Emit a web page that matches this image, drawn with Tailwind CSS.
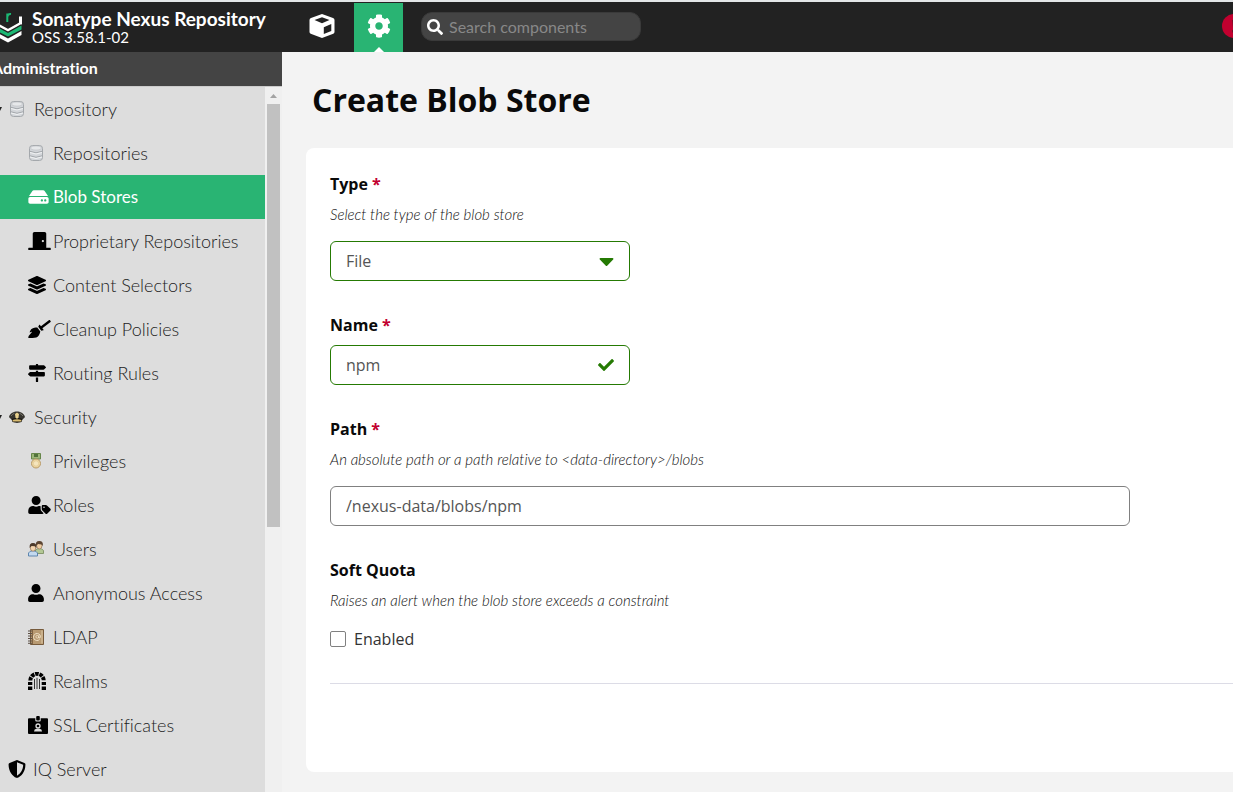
<!DOCTYPE html>
<html lang="en">
<head>
<meta charset="utf-8">
<meta name="viewport" content="width=device-width, initial-scale=1">
<title>Create Blob Store - Sonatype Nexus Repository</title>
<script src="https://cdn.jsdelivr.net/npm/@tailwindcss/browser@4"></script>
</head>
<body class="flex h-screen flex-col overflow-hidden bg-[#f3f3f3] font-['Lato',sans-serif] text-[#333] [font-variant-ligatures:none]">
<header class="flex h-13 shrink-0 items-stretch border-t-2 border-[#e3e6e8] bg-[#222] text-white">
  <div class="flex w-[282px] shrink-0 items-center gap-2">
    <svg class="h-8 w-6 shrink-0" viewBox="0 0 24 32" fill="none">
      <path d="M7.300 11V2.500M7.300 5.800C7.700 3.500 9 2.700 11 3" stroke="#1cb874" stroke-width="2"/>
      <path d="M-6 6V12L8 19.500L20.500 12.500V5.500" stroke="#fff" stroke-width="3"/>
      <path d="M-6 13L8 20.500L21.500 13V18L8 25.500L-6 18Z" fill="#222"/>
      <path d="M-6 14.500L8 22L21.500 14.500V18.500L8 25.500L-6 18.500Z" fill="#1cb874"/>
      <path d="M-6 20L8 27.500L21.500 20V24L8 31.500L-6 24Z" fill="#fff"/>
    </svg>
    <div>
      <div class="text-[19px] leading-5 font-bold whitespace-nowrap">Sonatype Nexus Repository</div>
      <div class="text-[15px] leading-4">OSS 3.58.1-02</div>
    </div>
  </div>
  <nav class="ml-2 flex" aria-label="Mode">
    <button class="flex w-16 items-center justify-center pb-0.5" aria-label="Browse">
      <svg class="h-6 w-[26px]" viewBox="0 0 26 24"><path fill="#fff" fill-rule="evenodd" d="M13 0L24 4Q25.500 4.700 25.500 6V18Q25.500 19.300 24.300 19.800L13 24L1.700 19.800Q.5 19.300 .5 18V6Q.5 4.700 2 4ZM13 3.200L5.500 6L13 9.200L20.500 6ZM14.800 13.200V20L22.300 17V10Z"/></svg>
    </button>
    <button class="relative flex w-[49px] items-center justify-center border-t border-[#222] bg-[#29b473] pb-[3px]" aria-label="Administration" aria-current="page">
      <svg class="size-6" viewBox="0 0 512 512" fill="#fff"><path d="M487.400 315.700l-42.600-24.600c4.300-23.200 4.300-47 0-70.200l42.600-24.600c4.900-2.800 7.100-8.600 5.500-14-11.100-35.600-30-67.800-54.700-94.600-3.800-4.100-10-5.100-14.800-2.300L380.800 110c-17.900-15.400-38.500-27.300-60.800-35.100V25.800c0-5.600-3.900-10.500-9.400-11.700-36.700-8.200-74.300-7.800-109.200 0-5.500 1.200-9.400 6.100-9.400 11.700V75c-22.200 7.900-42.800 19.800-60.800 35.100L88.700 85.500c-4.900-2.800-11-1.900-14.800 2.300-24.700 26.700-43.600 58.900-54.700 94.600-1.700 5.400.6 11.200 5.500 14L67.300 221c-4.300 23.200-4.300 47 0 70.200l-42.600 24.600c-4.900 2.800-7.100 8.600-5.500 14 11.100 35.600 30 67.800 54.700 94.600 3.800 4.100 10 5.100 14.800 2.300l42.600-24.600c17.900 15.400 38.500 27.300 60.800 35.100v49.200c0 5.600 3.900 10.500 9.400 11.700 36.700 8.200 74.300 7.800 109.200 0 5.500-1.200 9.400-6.100 9.400-11.700v-49.200c22.200-7.900 42.800-19.800 60.800-35.100l42.600 24.600c4.900 2.800 11 1.900 14.800-2.300 24.700-26.700 43.600-58.900 54.700-94.600 1.500-5.500-.7-11.300-5.600-14.100zM256 336c-44.100 0-80-35.900-80-80s35.900-80 80-80 80 35.900 80 80-35.900 80-80 80z"/></svg>
      <svg class="absolute bottom-0 h-[5px] w-[10px]" viewBox="0 0 10 5" fill="#fff"><path d="M0 5L5 0L10 5Z"/></svg>
    </button>
  </nav>
  <label class="mb-px ml-[18px] flex h-[29px] w-[220px] items-center gap-[6px] self-center rounded-[11px] border border-[#3a3a3a] bg-[#444] pr-2 pl-[5px]">
    <svg class="size-4 shrink-0" viewBox="0 0 512 512" fill="#fff" aria-label="Search"><path d="M505 442.700L405.300 343c-4.500-4.500-10.600-7-17-7H372c27.600-35.300 44-79.700 44-128C416 93.100 322.900 0 208 0S0 93.100 0 208s93.100 208 208 208c48.300 0 92.700-16.400 128-44v16.300c0 6.400 2.500 12.500 7 17l99.700 99.700c9.400 9.400 24.600 9.400 33.900 0l28.300-28.300c9.400-9.400 9.400-24.600.1-34zM208 336c-70.700 0-128-57.200-128-128 0-70.700 57.200-128 128-128 70.700 0 128 57.200 128 128 0 70.700-57.200 128-128 128z"/></svg>
    <input type="search" placeholder="Search components" aria-label="Search components" class="min-w-0 flex-1 bg-transparent text-base text-white outline-none placeholder:text-[#888]">
  </label>
  <button class="-mr-[13px] mb-0.5 ml-auto shrink-0 self-center" aria-label="System health">
    <svg class="size-6" viewBox="0 0 24 24"><circle cx="12" cy="12" r="12" fill="#c2002f"/><path d="M10.500 6H13.500L13 13.500H11ZM10.500 16H13.500V18.500H10.500Z" fill="#222"/></svg>
  </button>
</header>

<div class="flex min-h-0 flex-1">
  <aside class="flex w-[282px] shrink-0 flex-col">
    <h2 class="-ml-2 h-[34px] shrink-0 bg-[#444] text-base leading-8 font-bold text-white">Administration</h2>
    <div class="flex min-h-0 flex-1 border-t border-[#ccc] bg-[#ddd]">
      <nav class="min-w-0 flex-1 overflow-hidden text-lg font-light text-[#222]" aria-label="Administration">
        <a href="#repository" class="flex h-11 items-center">
          <span class="flex w-[34px] shrink-0 items-center gap-[7px]">
            <svg class="h-2 w-[2px]" viewBox="0 0 2 8"><path d="M0 2H2L0 6Z" fill="#222"/></svg>
            <svg class="size-4" viewBox="0 0 16 16"><rect x="1.500" y=".5" width="13" height="15" rx="3" fill="#d2d5d9" stroke="#a4a8ac"/><path d="M2 6.300Q8 9.300 14 6.300M2 10.800Q8 13.800 14 10.800" fill="none" stroke="#a4a8ac"/><path d="M2 7.500Q8 10.500 14 7.500M2 12Q8 15 14 12" fill="none" stroke="#f4f5f6" stroke-width=".9"/><ellipse cx="8" cy="3" rx="5.500" ry="2" fill="#e6e8ea" stroke="#b8bbbf" stroke-width=".5"/></svg>
          </span>Repository</a>
        <a href="#repositories" class="flex h-11 items-center pl-7">
          <span class="w-[25px] shrink-0"><svg class="size-4" viewBox="0 0 16 16"><rect x="1.500" y=".5" width="13" height="15" rx="3" fill="#d2d5d9" stroke="#a4a8ac"/><path d="M2 6.300Q8 9.300 14 6.300M2 10.800Q8 13.800 14 10.800" fill="none" stroke="#a4a8ac"/><path d="M2 7.500Q8 10.500 14 7.500M2 12Q8 15 14 12" fill="none" stroke="#f4f5f6" stroke-width=".9"/><ellipse cx="8" cy="3" rx="5.500" ry="2" fill="#e6e8ea" stroke="#b8bbbf" stroke-width=".5"/></svg></span>Repositories</a>
        <a href="#blobstores" class="flex h-11 items-center bg-[#29b473] pl-7 font-normal text-white" aria-current="page">
          <span class="w-[25px] shrink-0"><svg class="h-[18px] w-[21px]" viewBox="0 0 576 512" fill="#fff"><path d="M576 304v96c0 26.510-21.490 48-48 48H48c-26.510 0-48-21.490-48-48v-96c0-26.510 21.490-48 48-48h480c26.510 0 48 21.490 48 48zm-48-80a79.557 79.557 0 0 1 30.777 6.165L462.250 85.374A48.003 48.003 0 0 0 422.311 64H153.689a48 48 0 0 0-39.938 21.374L17.223 230.165A79.557 79.557 0 0 1 48 224h480zm-48 96c-17.673 0-32 14.327-32 32s14.327 32 32 32 32-14.327 32-32-14.327-32-32-32zm-96 0c-17.673 0-32 14.327-32 32s14.327 32 32 32 32-14.327 32-32-14.327-32-32-32z"/></svg></span><span class="text-[17px]">Blob Stores</span></a>
        <a href="#proprietary" class="flex h-11 items-center pl-7">
          <span class="w-[25px] shrink-0"><svg class="h-[18px] w-[23px]" viewBox="0 0 640 512" fill="#000"><path d="M624 448H512V50.800C512 22.780 490.470 0 464 0H175.990c-26.470 0-48 22.780-48 50.800V448H16c-8.840 0-16 7.160-16 16v32c0 8.840 7.160 16 16 16h608c8.840 0 16-7.160 16-16v-32c0-8.840-7.160-16-16-16zM415.990 288c-17.670 0-32-14.330-32-32s14.330-32 32-32 32 14.330 32 32c.01 17.670-14.320 32-32 32z"/></svg></span>Proprietary Repositories</a>
        <a href="#selectors" class="flex h-11 items-center pl-7">
          <span class="w-[25px] shrink-0"><svg class="size-[18px]" viewBox="0 0 512 512" fill="#000"><path d="M12.410 148.020l232.940 105.670c6.800 3.090 14.490 3.090 21.290 0l232.940-105.670c16.550-7.510 16.550-32.520 0-40.030L266.650 2.310a25.607 25.607 0 0 0-21.290 0L12.410 107.980c-16.550 7.510-16.550 32.530 0 40.040zm487.180 88.280l-58.090-26.330-161.640 73.270c-7.560 3.430-15.590 5.170-23.860 5.170s-16.290-1.740-23.860-5.170L70.510 209.970l-58.100 26.330c-16.550 7.500-16.550 32.500 0 40l232.940 105.590c6.800 3.080 14.490 3.080 21.290 0L499.590 276.300c16.550-7.500 16.550-32.500 0-40zm0 127.800l-57.870-26.230-161.860 73.370c-7.560 3.430-15.590 5.170-23.860 5.170s-16.290-1.740-23.860-5.170L70.290 337.870 12.410 364.100c-16.550 7.500-16.550 32.500 0 40l232.940 105.590c6.800 3.080 14.490 3.080 21.290 0L499.590 404.100c16.550-7.500 16.550-32.500 0-40z"/></svg></span>Content Selectors</a>
        <a href="#cleanup" class="flex h-11 items-center pl-7">
          <span class="w-[25px] shrink-0"><svg class="h-[18px] w-[23px]" viewBox="0 0 640 512" fill="#000"><path d="M256.470 216.770l86.730 109.180s-16.600 102.360-76.570 150.120C206.660 523.850 0 510.190 0 510.190s3.800-23.140 11-55.430l94.620-112.170c3.970-4.700-.87-11.620-6.650-9.500l-60.400 22.090c14.440-41.660 32.720-80.040 54.600-97.470 59.970-47.760 163.300-40.940 163.300-40.940zM636.530 31.030l-19.860-25c-5.490-6.900-15.520-8.050-22.410-2.560l-232.480 177.800-34.140-42.970c-5.090-6.410-15.140-5.210-18.590 2.210l-25.330 54.550 86.730 109.180 58.800-12.450c8-1.690 11.420-11.200 6.340-17.600l-34.090-42.920 232.480-177.800c6.890-5.480 8.040-15.530 2.550-22.440z"/></svg></span>Cleanup Policies</a>
        <a href="#routing" class="flex h-11 items-center pl-7">
          <span class="w-[25px] shrink-0"><svg class="size-[18px]" viewBox="0 0 512 512" fill="#000"><path d="M507.310 84.690L464 41.370c-6-6-14.140-9.370-22.630-9.370H288V16c0-8.840-7.160-16-16-16h-32c-8.840 0-16 7.160-16 16v16H56c-13.250 0-24 10.750-24 24v80c0 13.250 10.750 24 24 24h385.370c8.490 0 16.620-3.370 22.630-9.370l43.310-43.310c6.250-6.260 6.250-16.380 0-22.630zM224 496c0 8.840 7.160 16 16 16h32c8.840 0 16-7.160 16-16V384h-64v112zm232-272H288v-32h-64v32H70.630c-8.490 0-16.620 3.370-22.630 9.370L4.690 276.690c-6.250 6.250-6.250 16.380 0 22.630L48 342.630c6 6 14.140 9.370 22.630 9.370H456c13.250 0 24-10.750 24-24v-80c0-13.250-10.750-24-24-24z"/></svg></span>Routing Rules</a>
        <a href="#security" class="flex h-11 items-center">
          <span class="flex w-[34px] shrink-0 items-center gap-[7px]">
            <svg class="h-2 w-[2px]" viewBox="0 0 2 8"><path d="M0 2H2L0 6Z" fill="#222"/></svg>
            <svg class="size-4" viewBox="0 0 16 16"><path d="M0 8C1 4 5 2.500 8 2.500S15 4 16 8C15 9.500 13.500 10 13 11L8 13.500L3 11C2.500 10 1 9.500 0 8Z" fill="#37352f"/><path d="M2.500 10Q8 8 13.500 10L12.500 13Q8 14.500 3.500 13Z" fill="#16140f"/><path d="M3.500 11Q8 9.500 12.500 11L12 12.500H4Z" fill="#d9bc72"/><path d="M8 3.500L10 5L9.500 8.500L8 10L6.500 8.500L6 5Z" fill="#ead28e"/><path d="M2 7Q4 4.500 5.500 4.300M14 7Q12 4.500 10.500 4.300" stroke="#78756b" fill="none"/></svg>
          </span>Security</a>
        <a href="#privileges" class="flex h-11 items-center pl-7">
          <span class="w-[25px] shrink-0"><svg class="size-4" viewBox="0 0 16 16"><path d="M3.500 .5H12.500V6H3.500Z" fill="#9db779" stroke="#66864a"/><path d="M6 1H10V4H6Z" fill="#52733b"/><circle cx="8" cy="10.500" r="4.500" fill="#eed8a2" stroke="#b99a68"/><circle cx="8" cy="10.500" r="2.700" fill="#f5e5bd" stroke="#ddc28a" stroke-width=".6"/></svg></span>Privileges</a>
        <a href="#roles" class="flex h-11 items-center pl-7">
          <span class="w-[25px] shrink-0"><svg class="h-[18px] w-[23px]" viewBox="0 0 640 512" fill="#000"><path d="M630.600 364.900l-90.300-90.200c-12-12-28.300-18.700-45.300-18.700h-79.300c-17.700 0-32 14.300-32 32v79.200c0 17 6.700 33.200 18.700 45.200l90.300 90.200c12.500 12.500 32.800 12.500 45.300 0l92.500-92.500c12.600-12.500 12.600-32.700.1-45.200zm-182.800-21c-13.300 0-24-10.700-24-24s10.700-24 24-24 24 10.700 24 24c0 13.200-10.700 24-24 24zm-223.800-88c70.700 0 128-57.300 128-128C352 57.300 294.700 0 224 0S96 57.300 96 128c0 70.600 57.300 127.900 128 127.900zm127.800 111.200V294c-12.200-3.600-24.900-6.200-38.200-6.200h-16.700c-22.200 10.200-46.900 16-72.900 16s-50.600-5.800-72.900-16h-16.700C60.200 287.900 0 348.100 0 422.300v41.600c0 26.500 21.500 48 48 48h352c15.500 0 29.100-7.500 37.900-18.900l-58-58c-18.100-18.100-28.100-42.200-28.100-67.900z"/></svg></span>Roles</a>
        <a href="#users" class="flex h-11 items-center pl-7">
          <span class="w-[25px] shrink-0"><svg class="size-4" viewBox="0 0 16 16"><path d="M7.500 12V9Q9 7.500 11.500 7.500T15.500 9.500V12.500H8Z" fill="#b3c895" stroke="#75895a" stroke-width=".8"/><ellipse cx="11.300" cy="4.500" rx="2.700" ry="3.500" fill="#efcda4" stroke="#876744" stroke-width=".6"/><path d="M8 5Q7 0 11.300 0T14.800 5L13.500 3.500L10 3Z" fill="#5c4532"/><path d="M.5 15V12Q1.500 9.800 5 9.800T9.500 12V15Z" fill="#c3d9ef" stroke="#527da8" stroke-width=".9"/><ellipse cx="5" cy="6.800" rx="2.700" ry="3.400" fill="#f4d4ae" stroke="#876744" stroke-width=".6"/><path d="M1.700 7Q1 2 5 2T8.400 7L6.800 5.200L3.500 5Z" fill="#4d3a2b"/></svg></span>Users</a>
        <a href="#anonymous" class="flex h-11 items-center pl-7">
          <span class="w-[25px] shrink-0"><svg class="h-[18px] w-4" viewBox="0 0 448 512" fill="#000"><path d="M224 256c70.700 0 128-57.300 128-128S294.700 0 224 0 96 57.300 96 128s57.300 128 128 128zm89.600 32h-16.700c-22.200 10.200-46.900 16-72.900 16s-50.600-5.800-72.900-16h-16.700C60.200 288 0 348.200 0 422.400V464c0 26.500 21.500 48 48 48h352c26.500 0 48-21.500 48-48v-41.600c0-74.200-60.200-134.400-134.400-134.400z"/></svg></span>Anonymous Access</a>
        <a href="#ldap" class="flex h-11 items-center pl-7">
          <span class="w-[25px] shrink-0"><svg class="size-4" viewBox="0 0 16 16"><path d="M2.500 .5H15.500V15.500H2.500Z" fill="#b89a72" stroke="#765a3b"/><path d="M4.500 1V15" stroke="#806342"/><path d="M14 1.500V14.500" stroke="#ddc8a5"/><path d="M0 2H4M0 4.500H4M0 7H4M0 9.500H4M0 12H4M0 14.300H4" stroke="#5d5146"/><path d="M11.500 10.500A3.500 3.500 0 1 1 12.500 7.500Q12.300 9.500 10.800 9V6.500" fill="none" stroke="#f1e3c8"/><circle cx="9.300" cy="7.800" r="1.400" fill="none" stroke="#f1e3c8" stroke-width=".8"/></svg></span>LDAP</a>
        <a href="#realms" class="flex h-11 items-center pl-7">
          <span class="w-[25px] shrink-0"><svg class="size-[18px]" viewBox="0 0 18 18"><path d="M2.300 8.500A6.700 6.700 0 0 1 15.700 8.500" fill="none" stroke="#000" stroke-width="4" stroke-dasharray="3.500 .8"/><path d="M0 10H4.300V13H0ZM0 14.500H4.300V18H0ZM13.700 10H18V13H13.700ZM13.700 14.500H18V18H13.700Z" fill="#000"/><path d="M6.500 7V17M9 5.800V17M11.500 7V17" stroke="#333" stroke-width="1"/></svg></span>Realms</a>
        <a href="#ssl" class="flex h-11 items-center pl-7">
          <span class="w-[25px] shrink-0"><svg class="h-[18px] w-5" viewBox="0 0 20 18"><path d="M1 2.200H7.300V4.500Q7.300 5.500 8.300 5.500H11.700Q12.700 5.500 12.700 4.500V2.200H19Q20 2.200 20 3.200V17Q20 18 19 18H1Q0 18 0 17V3.200Q0 2.200 1 2.200Z" fill="#000"/><rect x="8.200" y="0" width="3.600" height="4.500" rx="1" fill="#000"/><circle cx="10" cy="10" r="2" fill="none" stroke="#ddd" stroke-width="1.300"/><path d="M6 15.500Q6 13 8.500 12.800H11.500Q14 13 14 15.500Z" fill="#ddd"/></svg></span>SSL Certificates</a>
        <a href="#iq" class="flex h-11 items-center pl-2">
          <span class="w-[25px] shrink-0"><svg class="size-[18px]" viewBox="0 0 512 512" fill="#000"><path d="M466.500 83.700l-192-80a48.150 48.150 0 0 0-36.900 0l-192 80C27.700 91.100 16 108.600 16 128c0 198.500 114.500 335.700 221.500 380.300 11.800 4.900 25.100 4.900 36.900 0C360.100 472.600 496 349.300 496 128c0-19.400-11.700-36.900-29.500-44.300zM256.100 446.300l-.1-381 175.900 73.300c-3.300 151.400-82.100 261.100-175.800 307.700z"/></svg></span>IQ Server</a>
      </nav>
      <div class="flex w-[17px] shrink-0 flex-col items-center bg-[#f0f0f0]" aria-hidden="true">
        <svg class="h-[17px] w-[17px] shrink-0" viewBox="0 0 17 17"><path d="M5 11L8.500 7L12 11Z" fill="#a3a3a3"/></svg>
        <div class="h-3/5 w-[13px] bg-[#c1c1c1]"></div>
      </div>
    </div>
  </aside>

  <main class="min-w-0 flex-1 overflow-hidden pl-6 font-['Open_Sans',sans-serif]">
    <h1 class="py-7 pl-[6px] text-[32px] leading-10 font-bold text-[#0a0a0a]">Create Blob Store</h1>
    <form class="-mr-6 rounded-lg bg-white px-6 pt-[26px] pb-[88px] text-base leading-5">
      <div class="mb-[34px]">
        <label for="type" class="block font-bold text-[#0a0a0a]">Type <span class="text-[#c2002f]">*</span></label>
        <p id="type-help" class="mt-[10px] font-['Lato',sans-serif] text-[15px] leading-5 font-light text-[#111] italic">Select the type of the blob store</p>
        <div class="relative mt-[17px] w-[300px]">
          <select id="type" aria-describedby="type-help" class="h-10 w-full appearance-none rounded-md border border-[#257a03] bg-white px-[15px] text-base text-[#555]"><option>File</option></select>
          <svg class="pointer-events-none absolute top-2 right-4 h-6 w-[15px]" viewBox="0 0 320 512" fill="#257a03"><path d="M31.300 192h257.300c17.800 0 26.700 21.500 14.100 34.100L174.100 354.800c-7.800 7.800-20.500 7.800-28.300 0L17.200 226.100C4.600 213.500 13.500 192 31.300 192z"/></svg>
        </div>
      </div>
      <div class="mb-[34px]">
        <label for="name" class="block font-bold text-[#0a0a0a]">Name <span class="text-[#c2002f]">*</span></label>
        <div class="relative mt-[10px] w-[300px]">
          <input id="name" type="text" value="npm" class="h-10 w-full rounded-md border border-[#257a03] bg-white px-[15px] text-base text-[#555]">
          <svg class="pointer-events-none absolute top-3 right-4 size-4" viewBox="0 0 512 512" fill="#257a03"><path d="M173.898 439.404l-166.400-166.400c-9.997-9.997-9.997-26.206 0-36.204l36.203-36.204c9.997-9.998 26.207-9.998 36.204 0L192 312.690 432.095 72.596c9.997-9.997 26.207-9.997 36.204 0l36.203 36.204c9.997 9.997 9.997 26.206 0 36.204l-294.400 294.401c-9.998 9.997-26.207 9.997-36.204-.001z"/></svg>
        </div>
      </div>
      <div class="mb-[34px]">
        <label for="path" class="block font-bold text-[#0a0a0a]">Path <span class="text-[#c2002f]">*</span></label>
        <p id="path-help" class="mt-[10px] font-['Lato',sans-serif] text-[15px] leading-5 font-light text-[#111] italic">An absolute path or a path relative to &lt;data-directory&gt;/blobs</p>
        <input id="path" type="text" value="/nexus-data/blobs/npm" aria-describedby="path-help" class="mt-[17px] block h-10 w-full max-w-[800px] rounded-md border border-[#808080] bg-white px-[15px] text-base text-[#555]">
      </div>
      <fieldset>
        <legend class="font-bold text-[#0a0a0a]">Soft Quota</legend>
        <p class="mt-[10px] font-['Lato',sans-serif] text-[15px] leading-5 font-light text-[#111] italic">Raises an alert when the blob store exceeds a constraint</p>
        <label class="mt-[19px] flex w-fit items-center gap-2"><input type="checkbox" class="size-4 appearance-none rounded-[2px] border border-[#808080] bg-white checked:bg-[#257a03]">Enabled</label>
      </fieldset>
      <hr class="mt-[34px] border-[#dcdce6]">
    </form>
  </main>
</div>
</body>
</html>
